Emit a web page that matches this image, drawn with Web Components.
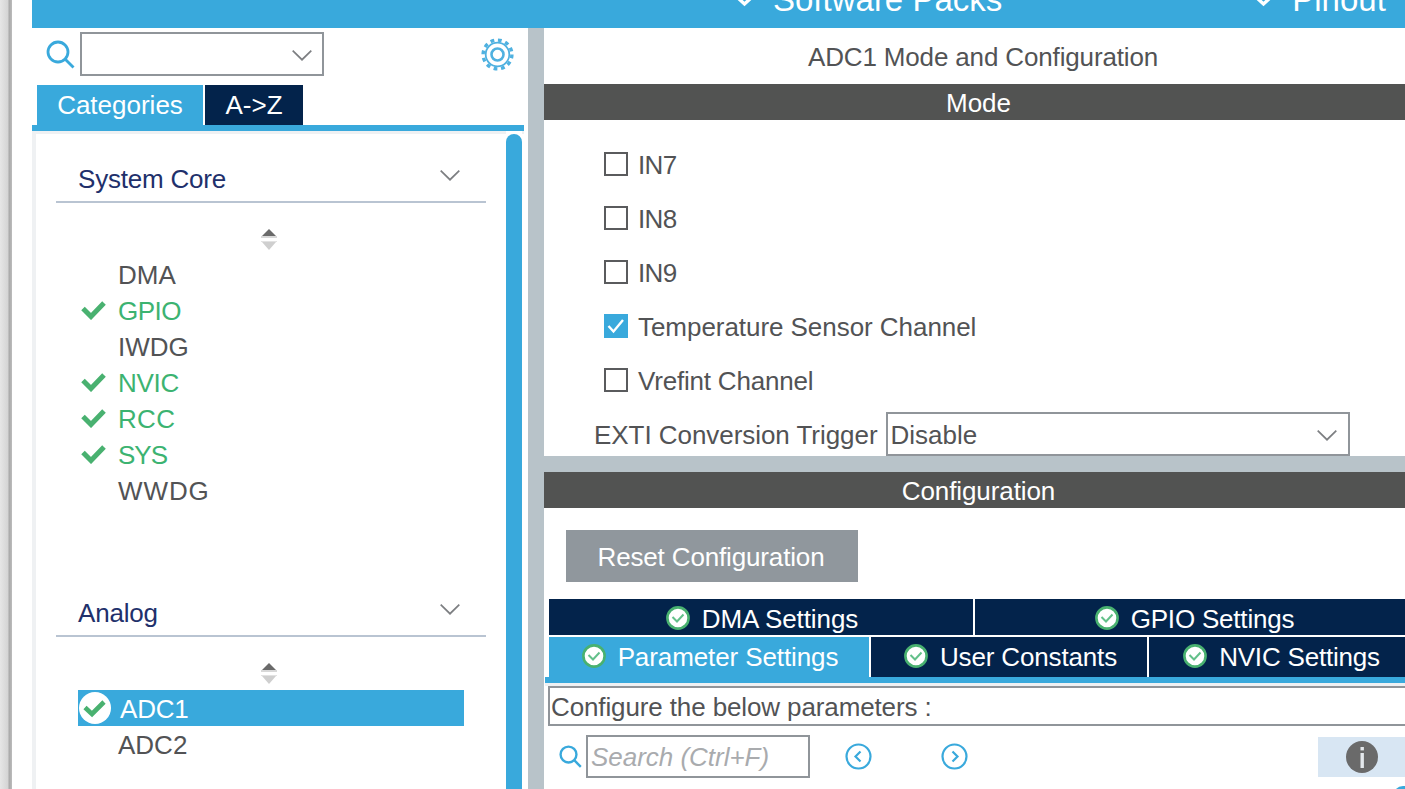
<!DOCTYPE html>
<html lang="en"><head><meta charset="utf-8"><title>ADC1 Mode and Configuration</title>
<style>
html,body{margin:0;height:789px;overflow:hidden;background:#fff;font-family:"Liberation Sans",Arial,sans-serif;font-size:26px;color:#525355}
</style></head><body>
<x-app></x-app>
<script>
const def=(name,css,html)=>customElements.define(name,class extends HTMLElement{
  connectedCallback(){ if(this.shadowRoot)return; const r=this.attachShadow({mode:'open'});
    const a=n=>this.getAttribute(n)||'';
    r.innerHTML=`<style>${css}</style>`+(typeof html==='function'?html(a,this):html); }
});
const chev=(c='#7d7f82')=>`<svg width="20" height="11" viewBox="0 0 20 11"><path d="M.7 .7 10 9.7 19.3 .7" fill="none" stroke="${c}" stroke-width="1.7"/></svg>`;
const lens=(s,sw)=>`<svg width="${s}" height="${s}" viewBox="0 0 29 29" style="display:block"><circle cx="12" cy="12" r="10" fill="none" stroke="#39a9dc" stroke-width="${sw}"/><path d="M19.5 19.5 27.5 27.5" stroke="#39a9dc" stroke-width="${sw}"/></svg>`;
const okIcon=`<svg width="24" height="24" viewBox="0 0 24 24" style="display:block;flex:none"><circle cx="12" cy="12" r="10.6" fill="#fff" stroke="#49b170" stroke-width="2.6"/><path d="M6.5 11 11 15.5 17.5 8.5" fill="none" stroke="#63c08a" stroke-width="2"/></svg>`;

def('x-tab',`:host{display:flex;align-items:center;justify-content:center;gap:12px;background:#03234b;color:#fff;white-space:nowrap;box-sizing:border-box}
:host([active]){background:#39a9dc}`,`<slot name="icon"></slot><slot></slot>`);

def('x-nav',`:host{display:flex;align-items:flex-end;height:28px;overflow:hidden;background:#39a9dc;color:#fff;font-size:33px;line-height:33px;padding-left:705px}
.i{display:flex;align-items:flex-end;gap:21px;padding-bottom:12px;white-space:nowrap}
.i+.i{margin-left:254px}
svg{display:block;margin-bottom:10px;overflow:visible;flex:none}`,
()=>{const c=`<svg width="15" height="6" viewBox="0 0 15 6"><path d="M1 -2 7.5 4 14 -2" fill="none" stroke="#fff" stroke-width="3.4"/></svg>`;
return `<div class="i">${c}<span>Software Packs</span></div><div class="i">${c}<span>Pinout</span></div>`});

def('x-item',`:host{display:flex;align-items:center;height:36px;margin-left:42px;width:386px;padding:2px 0 0 40px;box-sizing:border-box;position:relative;line-height:34px}
:host([ok]){color:#3cb371}
:host([sel]){background:#39a9dc;color:#fff;padding-left:42px}
svg{position:absolute;display:block}
.c{left:3px;top:8px}.s{left:1px;top:2px}`,
(a,h)=>{let i='';
 if(h.hasAttribute('sel'))i=`<svg class="s" width="32" height="32" viewBox="0 0 32 32"><circle cx="16" cy="16" r="16" fill="#fff"/><path d="M6 15.5 13 22 25 10" fill="none" stroke="#49b170" stroke-width="4.6"/></svg>`;
 else if(h.hasAttribute('ok'))i=`<svg class="c" width="25" height="20" viewBox="0 0 25 20"><path d="M2 8.5 10 16.5 23 3" fill="none" stroke="#49b170" stroke-width="5"/></svg>`;
 return i+`<slot></slot>`});

def('x-section',`:host{display:block;height:434px;box-sizing:border-box;padding-top:25px}
.h{display:flex;justify-content:space-between;align-items:flex-start;margin-left:20px;width:430px;border-bottom:2px solid #b9c4d2;line-height:40px;color:#21306b;padding:0 26px 0 22px;box-sizing:border-box;height:44px}
.h span{letter-spacing:var(--ls,0)}
.h svg{margin-top:11px;display:block}
.sort{height:53px;padding:26px 0 0 225px;box-sizing:border-box}
.sort svg{display:block}`,
(a)=>`<div class="h"><span>${a('label')}</span>${chev()}</div>
<div class="sort"><svg width="16" height="21" viewBox="0 0 16 21"><path d="M8 0 15 7H1Z" fill="#6a6a6a"/><rect y="7" width="16" height="2" fill="#d8d8d8"/><rect y="12" width="16" height="1" fill="#e2e2e2"/><path d="M1 13H15L8 21Z" fill="#cfcfcf"/></svg></div>
<slot></slot>`);

def('x-left',`:host{display:flex;flex-direction:column;width:496px;flex:none;min-height:0}
.search{display:flex;height:57px;padding:4px 14px 0 14px;box-sizing:border-box;gap:5px}
.lens{padding-top:8px}
.combo{width:244px;height:44px;box-sizing:border-box;border:2px solid #90959a;display:flex;justify-content:flex-end;padding:16px 10px 0 0}
.gear{margin-left:auto;padding-top:6px}
.gear svg,.combo svg{display:block}
.tabs{display:flex;height:40px;padding-left:5px;gap:2px;box-sizing:border-box}
x-tab:nth-child(1){width:166px}x-tab:nth-child(2){width:98px}
.rule{height:6px;width:492px;background:#39a9dc;flex:none}
.body{flex:1;display:flex;min-height:0;overflow:hidden;width:492px;border-left:4px solid #eff1f3;box-sizing:border-box}
.col{width:470px;flex:none;padding-top:3px;background:linear-gradient(#eff1f3 3px,#fff 3px)}
.bar{width:16px;margin-top:3px;background:#39a9dc;border-radius:8px 8px 0 0;flex:none}
.fill{flex:1;background:linear-gradient(#eff1f3 3px,#fff 3px)}`,
()=>`<div class="search"><div class="lens">${lens(29,2.8)}</div><div class="combo">${chev()}</div>
<div class="gear"><svg width="33" height="33" viewBox="0 0 33 33" fill="none" stroke="#4fb1e0"><circle cx="16.5" cy="16.5" r="14.4" stroke-width="3.4" stroke-dasharray="3.8 3.74"/><circle cx="16.5" cy="16.5" r="11.8" stroke-width="1.8"/><circle cx="16.5" cy="16.5" r="6" stroke-width="2.6"/></svg></div></div>
<div class="tabs"><x-tab active>Categories</x-tab><x-tab>A-&gt;Z</x-tab></div><div class="rule"></div>
<div class="body"><div class="col"><slot></slot></div><div class="bar"></div><div class="fill"></div></div>`);

def('x-check',`:host{display:flex;align-items:center;height:54px;gap:10px;white-space:nowrap}
.b{width:24px;height:24px;box-sizing:border-box;border:2px solid #5a5b5d;flex:none}
:host([on]) .b{background:#39a9dc;border-color:#39a9dc}
.t{padding-top:2px}
svg{display:block}`,
(a,h)=>`<div class="b">${h.hasAttribute('on')?`<svg width="20" height="20" viewBox="0 0 20 20"><path d="M2.5 10 7.5 15.5 17 4" fill="none" stroke="#fff" stroke-width="2.4"/></svg>`:''}</div><span class="t"><slot></slot></span>`);

def('x-header',`:host{display:block;height:36px;line-height:38px;background:#525352;color:#fff;text-align:center;flex:none}`,`<slot></slot>`);

def('x-select',`:host{display:flex;align-items:center;gap:8px;height:44px;margin-top:5px;margin-left:-10px;white-space:nowrap}
.l{padding-top:2px;letter-spacing:-.05px}
.s{width:464px;height:44px;box-sizing:border-box;border:2px solid #90959a;display:flex;justify-content:space-between;align-items:center;padding:2px 11px 0 3px}
svg{display:block}`,
(a)=>`<span class="l">${a('label')}</span><div class="s"><span>${a('value')}</span>${chev()}</div>`);

def('x-paramtabs',`:host{display:block;padding-left:5px;letter-spacing:-.1px}
.r{display:flex;gap:2px}.r+.r{margin-top:2px}
.a{height:36px}.b{height:40px}
x-tab{line-height:30px}
.a x-tab{padding-top:4px}
.a x-tab:nth-child(1){width:424px}.a x-tab:nth-child(2){width:438px;letter-spacing:-.2px;padding-right:1px}
.b x-tab:nth-child(1){width:320px}.b x-tab:nth-child(2){width:276px;padding-left:1px;letter-spacing:-.15px}.b x-tab:nth-child(3){width:264px;letter-spacing:-.2px;padding-right:1px}
.ic{display:block;flex:none;margin-top:-2px;margin-left:2px}`,
()=>{const t=(s,x='')=>`<x-tab ${x}><span slot="icon" class="ic">${okIcon}</span>${s}</x-tab>`;
return `<div class="r a">${t('DMA Settings')}${t('GPIO Settings')}</div><div class="r b">${t('Parameter Settings','active')}${t('User Constants')}${t('NVIC Settings')}</div>`});

def('x-tools',`:host{display:flex;height:43px;margin-top:9px;padding-left:15px;align-items:center;flex:none}
.f{width:224px;height:43px;box-sizing:border-box;border:2px solid #90959a;color:#a9abae;font-style:italic;display:flex;align-items:center;padding:2px 0 0 3px;margin-left:4px;letter-spacing:-.02px}
.p{margin-left:35px}.n{margin-left:69px}
.i{margin-left:auto;margin-right:7px;width:88px;height:40px;background:#d8e6f3;display:flex;align-items:center;justify-content:center}
svg{display:block;flex:none}`,
()=>{const circ=d=>`<svg width="27" height="27" viewBox="0 0 27 27" fill="none" stroke="#39a9dc"><circle cx="13.5" cy="13.5" r="12" stroke-width="2.2"/><path d="${d}" stroke-width="2.2"/></svg>`;
return `${lens(23,3)}<div class="f">Search (Ctrl+F)</div><span class="p">${circ('M15.5 8.5 10.5 13.5 15.5 18.5')}</span><span class="n">${circ('M11.5 8.5 16.5 13.5 11.5 18.5')}</span>
<div class="i"><svg width="32" height="32" viewBox="0 0 32 32"><circle cx="16" cy="16" r="16" fill="#6a6a6a"/><rect x="14.5" y="6" width="3.4" height="3.4" fill="#e4e8ec"/><rect x="14.5" y="12" width="3.4" height="15" fill="#e4e8ec"/></svg></div>`});

def('x-right',`:host{display:flex;flex-direction:column;width:869px;flex:none}
.title{height:56px;line-height:58px;text-align:center;padding-left:9px;box-sizing:border-box;flex:none;letter-spacing:-.15px}
.mode{height:336px;padding:17px 0 0 60px;box-sizing:border-box;flex:none}
.split{height:16px;background:#b8c3c9;flex:none}
x-header.c{letter-spacing:-.1px}
.reset{width:292px;height:52px;margin:22px 0 17px 22px;padding:2px 2px 0 0;box-sizing:border-box;background:#90979d;color:#fff;display:flex;align-items:center;justify-content:center;flex:none;letter-spacing:-.15px}
.rule{height:6px;background:#39a9dc;margin-left:1px;flex:none}
.gap{height:3px;background:#eff1f3;flex:none;margin-left:1px}
.conf{height:40px;margin-left:4px;box-sizing:border-box;border:2px solid #90959a;border-right:0;line-height:38px;padding-left:1px;flex:none;letter-spacing:-.12px}
.arc{align-self:flex-end;margin:8px 8px 0 0;width:12px;height:12px;background:#39a9dc;border-radius:10px 0 0 0;flex:none}`,
()=>`<div class="title">ADC1 Mode and Configuration</div><x-header>Mode</x-header>
<div class="mode"><slot></slot></div><div class="split"></div><x-header class="c">Configuration</x-header>
<div class="reset">Reset Configuration</div><x-paramtabs></x-paramtabs><div class="rule"></div><div class="gap"></div>
<div class="conf">Configure the below parameters :</div><x-tools></x-tools><div class="arc"></div>`);

def('x-app',`:host{display:flex;height:789px;width:1405px;overflow:hidden}
.strip{width:12px;flex:none;background:linear-gradient(90deg,#e6e6e6 0,#d4d4d4 8px,#a8a8a8 9px,#bcbcbc 12px)}
.main{margin-left:20px;flex:none;width:1373px;overflow:hidden;display:flex;flex-direction:column}
.row{display:flex;flex:1;min-height:0;overflow:hidden}
.split{width:16px;background:#b8c3c9;flex:none}`,
()=>`<div class="strip"></div><div class="main"><x-nav></x-nav><div class="row">
<x-left>
<x-section label="System Core" style="--ls:-.2px"><x-item>DMA</x-item><x-item ok style="letter-spacing:-.5px">GPIO</x-item><x-item>IWDG</x-item><x-item ok style="letter-spacing:-.25px">NVIC</x-item><x-item ok style="letter-spacing:.3px">RCC</x-item><x-item ok style="letter-spacing:-1px">SYS</x-item><x-item style="letter-spacing:.9px">WWDG</x-item></x-section>
<x-section label="Analog" style="--ls:-.2px"><x-item sel style="letter-spacing:-.2px">ADC1</x-item><x-item>ADC2</x-item></x-section>
</x-left><div class="split"></div>
<x-right><x-check style="letter-spacing:-.6px">IN7</x-check><x-check style="letter-spacing:-.6px">IN8</x-check><x-check style="letter-spacing:-.6px">IN9</x-check><x-check on style="letter-spacing:-.05px">Temperature Sensor Channel</x-check><x-check style="letter-spacing:-.2px">Vrefint Channel</x-check><x-select label="EXTI Conversion Trigger" value="Disable"></x-select></x-right>
</div></div>`);
</script></body></html>
